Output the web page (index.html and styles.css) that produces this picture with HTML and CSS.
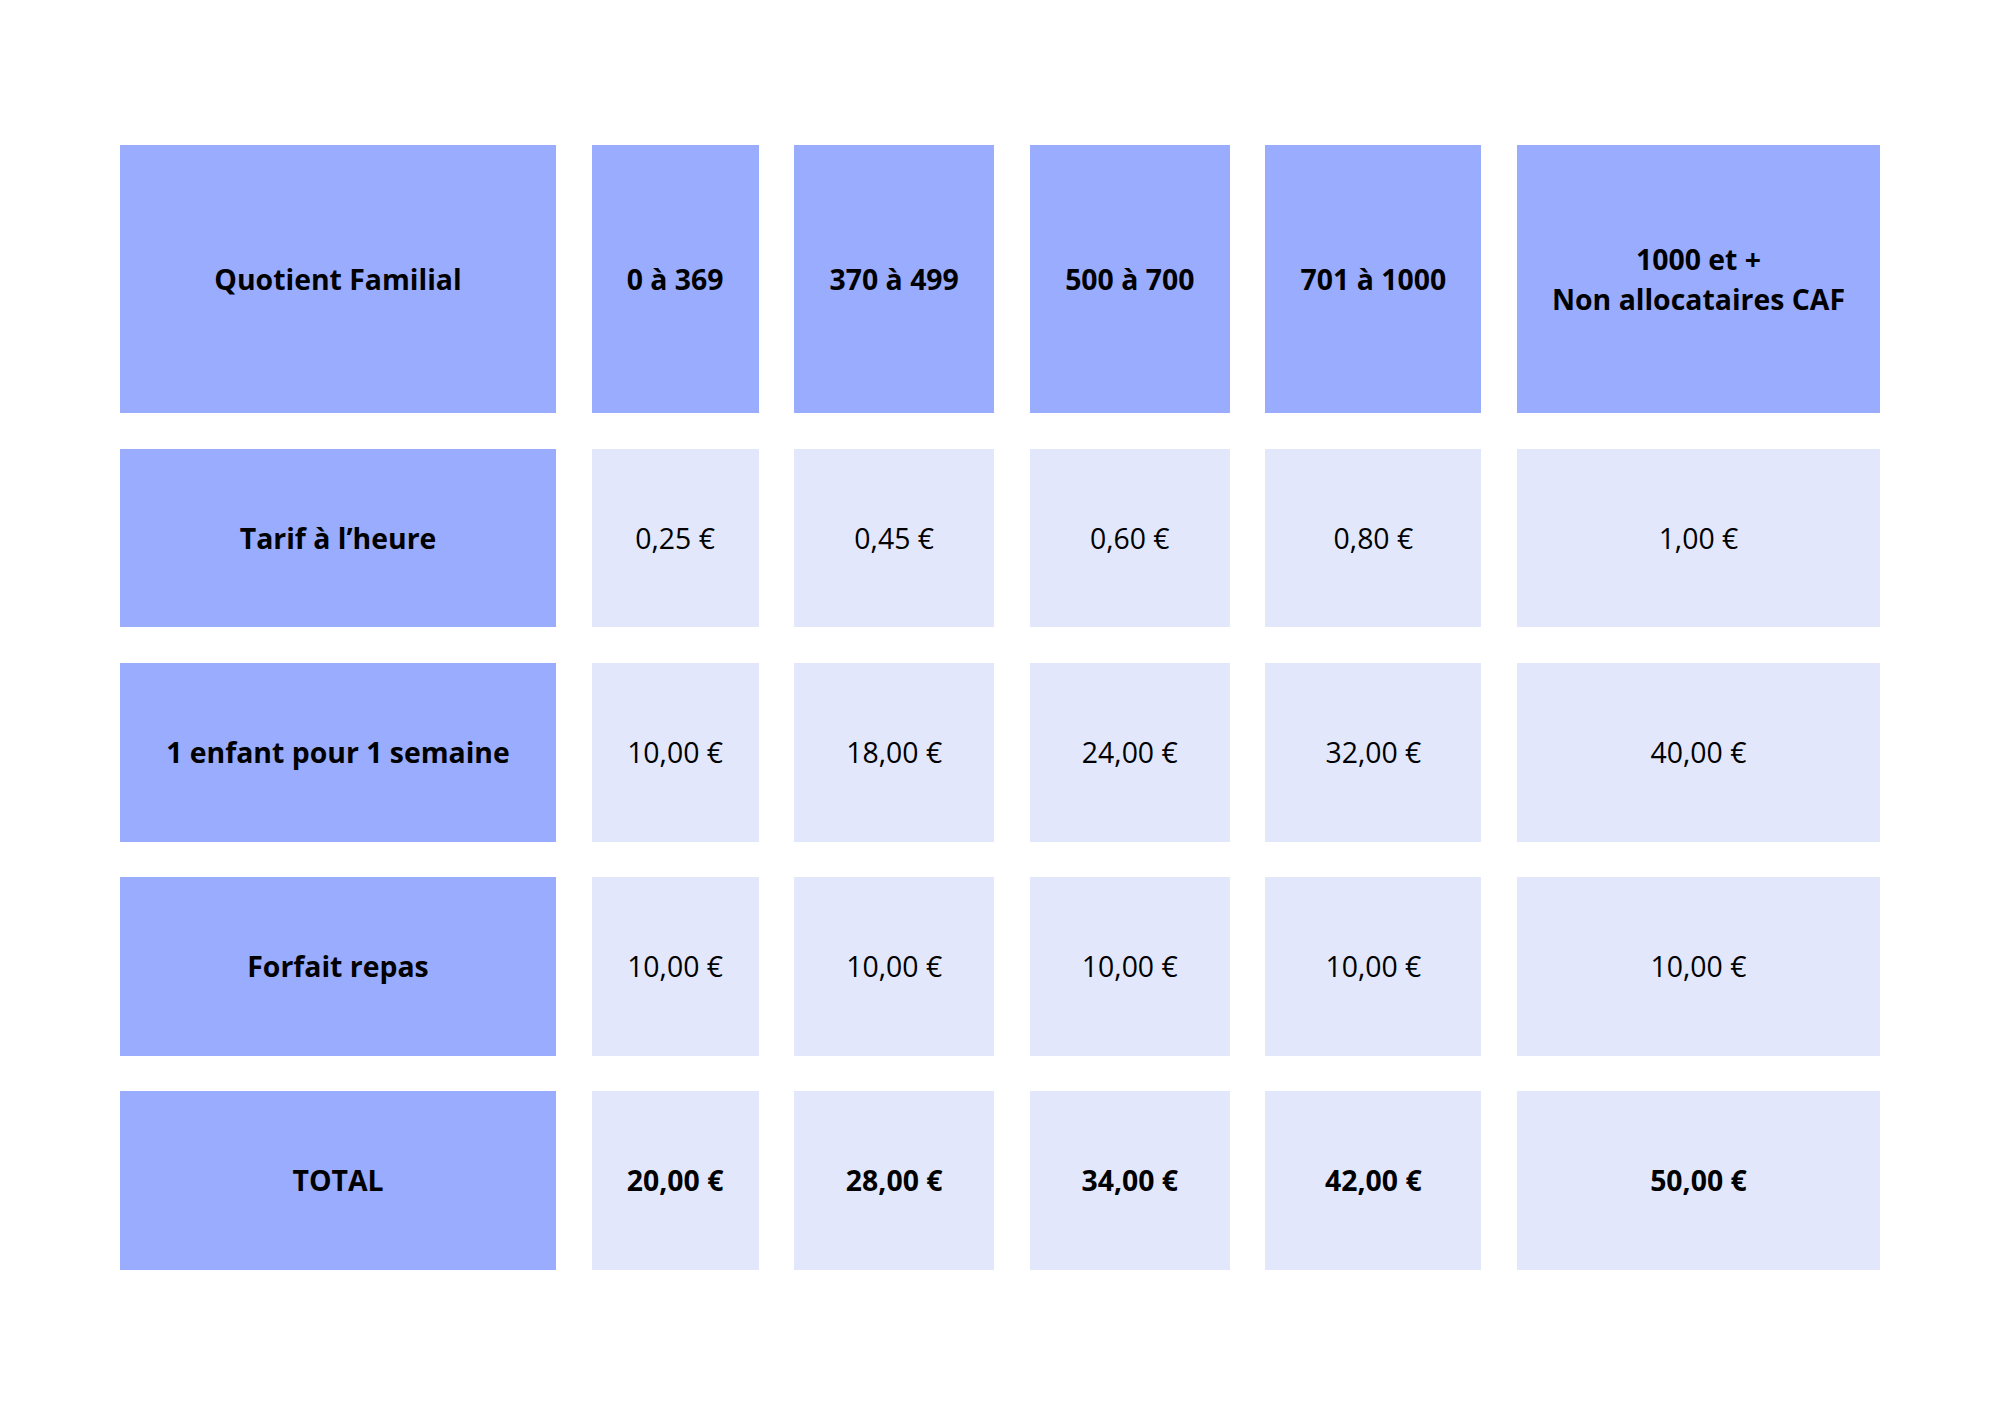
FILE: index.html
```html
<!DOCTYPE html>
<html lang="fr">
<head>
<meta charset="utf-8">
<title>Tarifs</title>
<link rel="stylesheet" href="styles.css">
</head>
<body>
<main class="page">
  <div class="grid">
    <div class="cell head">Quotient Familial</div>
    <div class="cell head">0 à 369</div>
    <div class="cell head">370 à 499</div>
    <div class="cell head">500 à 700</div>
    <div class="cell head">701 à 1000</div>
    <div class="cell head">1000 et +<br>Non allocataires CAF</div>

    <div class="cell head">Tarif à l’heure</div>
    <div class="cell val">0,25 €</div>
    <div class="cell val">0,45 €</div>
    <div class="cell val">0,60 €</div>
    <div class="cell val">0,80 €</div>
    <div class="cell val">1,00 €</div>

    <div class="cell head">1 enfant pour 1 semaine</div>
    <div class="cell val">10,00 €</div>
    <div class="cell val">18,00 €</div>
    <div class="cell val">24,00 €</div>
    <div class="cell val">32,00 €</div>
    <div class="cell val">40,00 €</div>

    <div class="cell head">Forfait repas</div>
    <div class="cell val">10,00 €</div>
    <div class="cell val">10,00 €</div>
    <div class="cell val">10,00 €</div>
    <div class="cell val">10,00 €</div>
    <div class="cell val">10,00 €</div>

    <div class="cell head">TOTAL</div>
    <div class="cell val total">20,00 €</div>
    <div class="cell val total">28,00 €</div>
    <div class="cell val total">34,00 €</div>
    <div class="cell val total">42,00 €</div>
    <div class="cell val total">50,00 €</div>
  </div>
</main>
</body>
</html>
```

FILE: styles.css
```css
html, body {
  margin: 0;
  padding: 0;
  background: #ffffff;
}

.page {
  padding: 145px 0 0 120px;
  font-family: "Open Sans", "Noto Sans", sans-serif;
  color: #000000;
}

.grid {
  display: grid;
  grid-template-columns: 436px 167px 200px 200px 216px 363px;
  grid-template-rows: 268px repeat(4, 178.7px);
  gap: 35.6px;
}

.cell {
  display: flex;
  align-items: center;
  justify-content: center;
  text-align: center;
  font-size: 28.4px;
  line-height: 1.4;
  padding-top: 1px;
}

.head {
  background: #9aacfe;
  font-weight: 700;
}

.val {
  background: #e2e7fc;
  font-weight: 400;
}

.total {
  font-weight: 700;
}
```
